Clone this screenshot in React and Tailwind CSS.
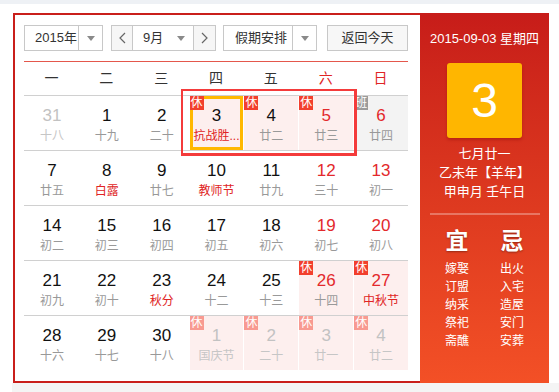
import React from "react";

const rows = [
  [
    { n: "31", l: "十八", other: true },
    { n: "1", l: "十九" },
    { n: "2", l: "二十" },
    { n: "3", l: "抗战胜...", fest: true, badge: "休", sel: true },
    { n: "4", l: "廿二", badge: "休" },
    { n: "5", l: "廿三", badge: "休", we: true },
    { n: "6", l: "廿四", badge: "班", we: true },
  ],
  [
    { n: "7", l: "廿五" },
    { n: "8", l: "白露", fest: true },
    { n: "9", l: "廿七" },
    { n: "10", l: "教师节", fest: true },
    { n: "11", l: "廿九" },
    { n: "12", l: "三十", we: true },
    { n: "13", l: "初一", we: true },
  ],
  [
    { n: "14", l: "初二" },
    { n: "15", l: "初三" },
    { n: "16", l: "初四" },
    { n: "17", l: "初五" },
    { n: "18", l: "初六" },
    { n: "19", l: "初七", we: true },
    { n: "20", l: "初八", we: true },
  ],
  [
    { n: "21", l: "初九" },
    { n: "22", l: "初十" },
    { n: "23", l: "秋分", fest: true },
    { n: "24", l: "十二" },
    { n: "25", l: "十三" },
    { n: "26", l: "十四", we: true, badge: "休" },
    { n: "27", l: "中秋节", we: true, fest: true, badge: "休" },
  ],
  [
    { n: "28", l: "十六" },
    { n: "29", l: "十七" },
    { n: "30", l: "十八" },
    { n: "1", l: "国庆节", other: true, badge: "休" },
    { n: "2", l: "二十", other: true, badge: "休" },
    { n: "3", l: "廿一", other: true, badge: "休" },
    { n: "4", l: "廿二", other: true, badge: "休" },
  ],
];

function Tri() {
  return (
    <svg width="8" height="5" viewBox="0 0 8 5">
      <polygon points="0,0 8,0 4,5" fill="#8a8a8a" />
    </svg>
  );
}

function Chevron({ dir }) {
  return (
    <svg width="7" height="12" viewBox="0 0 7 12">
      <polyline
        points={dir === "left" ? "6,1 1,6 6,11" : "1,1 6,6 1,11"}
        fill="none"
        stroke="#666"
        strokeWidth="1.2"
      />
    </svg>
  );
}

function Cell({ d }) {
  let bg = "";
  if (d.badge === "休") bg = "bg-[#fdefee]";
  if (d.badge === "班") bg = "bg-[#f3f3f3]";
  let numColor = "text-[#111]";
  if (d.we) numColor = "text-[#e3292c]";
  if (d.other) numColor = "text-[#c2c2c2]";
  let lunColor = "text-[#999]";
  if (d.fest) lunColor = "text-[#e02424]";
  if (d.other) lunColor = "text-[#c6c6c6]";
  let badgeBg = "bg-[#f23f2d]";
  if (d.badge === "班") badgeBg = "bg-[#9b9b9b]";
  if (d.other && d.badge) badgeBg = "bg-[#f89a91]";
  return (
    <div className="h-[54px] pl-px">
      <div className={`relative h-full flex flex-col items-center pt-[9px] ${bg}`}>
        {d.sel && (
          <div className="absolute inset-0 border-[3px] border-[#ffb800]" />
        )}
        {d.badge && (
          <div
            className={`absolute left-0 top-0 w-[14px] h-[14px] flex items-center justify-center text-white text-[12px] leading-[14px] ${badgeBg}`}
          >
            {d.badge}
          </div>
        )}
        <div className={`text-[17px] leading-[22px] ${numColor}`}>{d.n}</div>
        <div className={`text-[12px] leading-[18px] whitespace-nowrap ${lunColor}`}>{d.l}</div>
      </div>
    </div>
  );
}

export default function App() {
  const weekdays = ["一", "二", "三", "四", "五", "六", "日"];
  return (
    <div className="w-[559px] h-[392px] bg-white flex flex-col font-['Liberation_Sans','Noto_Sans_CJK_SC',sans-serif] overflow-hidden">
      <div className="h-[4px] bg-[#eef1f5]" />
      <div className="mt-[9px] ml-[13px] w-[536px] h-[370px] flex">
        {/* left part */}
        <div className="w-[407px] h-full border-2 border-r-0 border-[#c91f1b] pt-[10px] pl-[9px]">
          <div className="flex h-[26px] text-[13px] text-[#333]">
            <div className="flex w-[79px] border border-[#c8c8c8] bg-white">
              <div className="flex-1 flex items-center pl-[10px]">2015年</div>
              <div className="w-[24px] border-l border-[#c8c8c8] flex items-center justify-center">
                <Tri />
              </div>
            </div>
            <div className="ml-[8px] flex w-[105px] border border-[#c8c8c8] bg-white">
              <div className="w-[21px] bg-[#f6f6f6] border-r border-[#c8c8c8] flex items-center justify-center">
                <Chevron dir="left" />
              </div>
              <div className="flex-1 flex items-center justify-between pl-[10px] pr-[8px]">
                <span>9月</span>
                <Tri />
              </div>
              <div className="w-[22px] bg-[#f6f6f6] border-l border-[#c8c8c8] flex items-center justify-center">
                <Chevron dir="right" />
              </div>
            </div>
            <div className="ml-[7px] flex w-[94px] border border-[#c8c8c8] bg-white">
              <div className="flex-1 flex items-center pl-[11px]">假期安排</div>
              <div className="w-[24px] border-l border-[#c8c8c8] flex items-center justify-center">
                <Tri />
              </div>
            </div>
            <div className="ml-[10px] w-[81px] border border-[#c8c8c8] bg-[#f7f7f7] flex items-center justify-center">
              返回今天
            </div>
          </div>
          <div className="mt-[10px] w-[384px] h-px bg-[#e4574c]" />
          <div className="w-[384px] h-[33px] grid grid-cols-7 items-center text-[14px]">
            {weekdays.map((w, i) => (
              <div
                key={w}
                className={`text-center ${i >= 5 ? "text-[#e02424]" : "text-[#333]"}`}
              >
                {w}
              </div>
            ))}
          </div>
          <div className="relative w-[384px]">
            {rows.map((row, ri) => (
              <div key={ri} className="grid grid-cols-7 border-t border-[#d0d0d0]">
                {row.map((d, ci) => (
                  <Cell key={ci} d={d} />
                ))}
              </div>
            ))}
            <div className="absolute left-[157px] top-[-6px] w-[176px] h-[67px] border-2 border-r-[3px] border-b-[3px] border-[#f43b3b] pointer-events-none" />
          </div>
        </div>
        {/* right panel */}
        <div className="w-[129px] h-full bg-linear-to-b from-[#c71c19] to-[#f35026] flex flex-col items-center text-white">
          <div className="mt-[17px] text-[13px] leading-[18px] whitespace-nowrap">
            2015-09-03 星期四
          </div>
          <div className="mt-[15px] w-[75px] h-[75px] rounded-[3px] bg-[#ffb600] shadow-[0_2px_3px_rgba(120,0,0,0.3)] flex items-center justify-center text-[48px] leading-none">
            3
          </div>
          <div className="mt-[6px] text-[13px] leading-[19px] text-center whitespace-nowrap">
            <div>七月廿一</div>
            <div>乙未年【羊年】</div>
            <div>甲申月 壬午日</div>
          </div>
          <div className="mt-[12px] w-[110px] h-[2px] bg-white/30" />
          <div className="mt-[13px] w-[110px] grid grid-cols-2">
            <div className="flex flex-col items-center">
              <div className="text-[23px] leading-[26px] font-bold [text-shadow:0_1px_2px_rgba(0,0,0,0.35)]">宜</div>
              <div className="mt-[6px] text-[12px] leading-[18px] flex flex-col items-center">
                <span>嫁娶</span>
                <span>订盟</span>
                <span>纳采</span>
                <span>祭祀</span>
                <span>斋醮</span>
              </div>
            </div>
            <div className="flex flex-col items-center">
              <div className="text-[23px] leading-[26px] font-bold [text-shadow:0_1px_2px_rgba(0,0,0,0.35)]">忌</div>
              <div className="mt-[6px] text-[12px] leading-[18px] flex flex-col items-center">
                <span>出火</span>
                <span>入宅</span>
                <span>造屋</span>
                <span>安门</span>
                <span>安葬</span>
              </div>
            </div>
          </div>
        </div>
      </div>
      <div className="ml-[12px] flex-1 bg-[#f4f4f4]" />
    </div>
  );
}
